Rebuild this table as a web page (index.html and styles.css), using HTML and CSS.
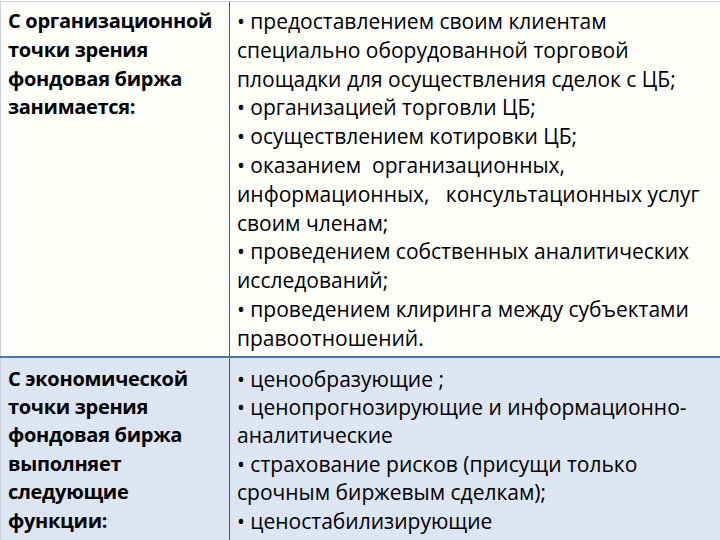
FILE: index.html
```html
<!DOCTYPE html>
<html lang="ru">
<head>
<meta charset="utf-8">
<title>Фондовая биржа</title>
<link rel="stylesheet" href="styles.css">
</head>
<body>
<div class="table">
  <div class="row row-light">
    <div class="cell cell-head">С организационной<br>точки зрения<br>фондовая биржа<br>занимается:</div>
    <div class="cell cell-body">• предоставлением своим клиентам<br>специально оборудованной торговой<br>площадки для осуществления сделок с ЦБ;<br>• организацией торговли ЦБ;<br>• осуществлением котировки ЦБ;<br>• оказанием&nbsp; организационных,<br>информационных,&nbsp;&nbsp; консультационных услуг<br>своим членам;<br>• проведением собственных аналитических<br>исследований;<br>• проведением клиринга между субъектами<br>правоотношений.</div>
  </div>
  <div class="row row-blue">
    <div class="cell cell-head">С экономической<br>точки зрения<br>фондовая биржа<br>выполняет<br>следующие<br>функции:</div>
    <div class="cell cell-body">• ценообразующие ;<br>• ценопрогнозирующие и информационно-<br>аналитические<br>• страхование рисков (присущи только<br>срочным биржевым сделкам);<br>• ценостабилизирующие</div>
  </div>
</div>
</body>
</html>
```
FILE: styles.css
```css
html, body {
  margin: 0;
  padding: 0;
  background: #ffffff;
}
body {
  width: 720px;
  height: 540px;
  overflow: hidden;
  font-family: "Open Sans", "Noto Sans", sans-serif;
  color: #000;
}
.table {
  display: flex;
  flex-direction: column;
  border-top: 1px solid #c9d3df;
  margin-top: 1px;
}
.row {
  display: grid;
  grid-template-columns: 230px 1fr;
}
.row-light {
  background: #fefefa;
  border-bottom: 2px solid #4a78a6;
}
.row-blue {
  background: #dce5f1;
  height: 200px;
}
.cell {
  white-space: nowrap;
}
.row-light .cell {
  line-height: 28.8px;
  padding-top: 5px;
  padding-bottom: 3px;
}
.row-blue .cell {
  line-height: 28.4px;
  padding-top: 7px;
}
.cell-head {
  font-size: 20px;
  letter-spacing: -0.3px;
  font-weight: bold;
  padding-left: 7px;
  border-left: 1px solid #c9d3df;
  border-right: 1px solid #3f5f8f;
}
.cell-body {
  font-size: 21px;
  padding-left: 7px;
}
```
